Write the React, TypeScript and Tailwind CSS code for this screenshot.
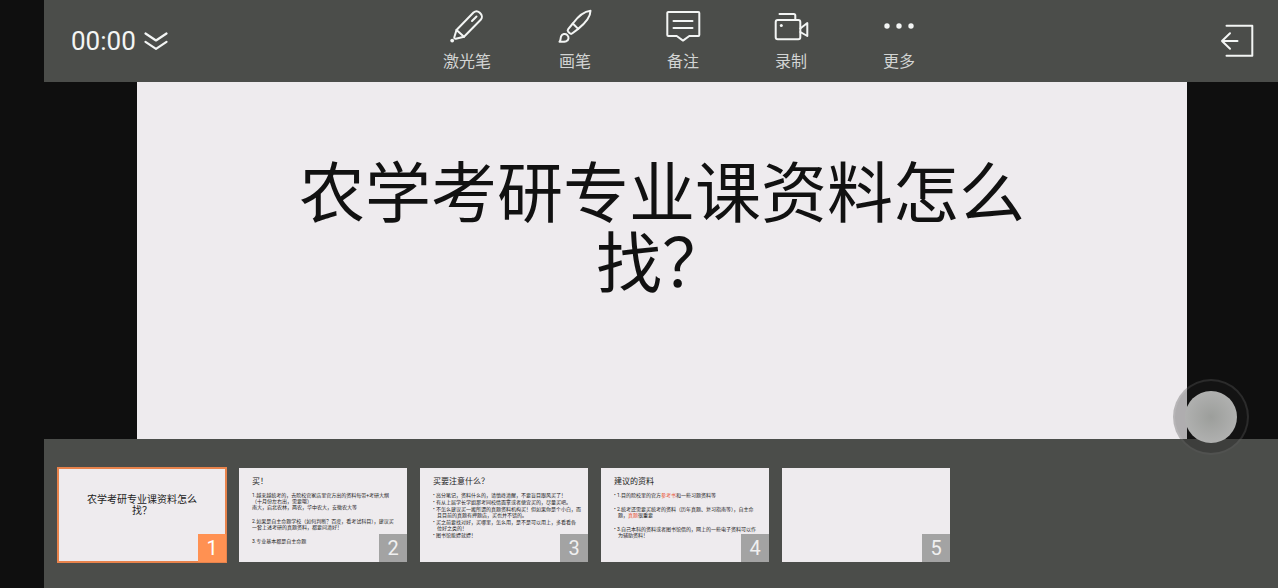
import React, { ReactNode, useState } from 'react'

type TOOL_TYPE = {
    label: string
    icon: ReactNode
}

type SLIDE_TYPE = {
    id: number
    label: string
    content: ReactNode
}

const tools: TOOL_TYPE[] = [
    {
        label: '激光笔',
        icon: (
            <>
                <path d="M7.5 22 24.5 4.5a4.6 4.6 0 0 1 6 0l1.200 1.200a4.400 4.400 0 0 1 0 6L15 28.800 6.800 30.800a1.300 1.300 0 0 1-1.500-1.600Z" />
                <path d="m7.500 22 7.500 6.800M23 13l4.500-4.500" />
                <circle cx="3.200" cy="32.600" r="1.900" fill="currentColor" stroke="none" />
            </>
        ),
    },
    {
        label: '画笔',
        icon: (
            <>
                <path d="M33.500 2.800C27 3.500 21 8.500 15.800 15.500l-4.600 5.600a2 2 0 0 0 0 2.600l1.600 1.600a2 2 0 0 0 2.600 0l5.800-4.400C28.500 15 33.500 9.500 33.500 2.800Z" />
                <path d="m15.800 15.500 5.400 5.400" />
                <path d="M2.500 33.800c1.500-1.500.8-3.500 1.600-5.500 1-2.500 4.200-3.200 6.200-1.200s1.500 5-1 6.100c-2 .8-4.600.6-6.800.6Z" />
            </>
        ),
    },
    {
        label: '备注',
        icon: (
            <>
                <path d="M3.300 4h30a1 1 0 0 1 1 1v22a1 1 0 0 1-1 1h-9L18 32.600 11.700 28H3.300a1 1 0 0 1-1-1V5a1 1 0 0 1 1-1Z" />
                <path d="M8.500 13h19M8.500 20h19" />
            </>
        ),
    },
    {
        label: '录制',
        icon: (
            <>
                <rect x="2.700" y="12" width="24.600" height="19.300" rx="2" />
                <path d="M6.500 6h14.300a1.500 1.500 0 0 1 1.500 1.500V12M27.300 20.500l7-5.500v13l-7-4" />
                <circle cx="8.300" cy="17.400" r="1.500" fill="currentColor" stroke="none" />
            </>
        ),
    },
    {
        label: '更多',
        icon: (
            <g fill="currentColor" stroke="none">
                <circle cx="6" cy="18" r="2.700" />
                <circle cx="18" cy="18" r="2.700" />
                <circle cx="30" cy="18" r="2.700" />
            </g>
        ),
    },
]

const slides: SLIDE_TYPE[] = [
    {
        id: 1,
        label: '农学考研专业课资料怎么找？',
        content: (
            <div className="pt-[26px] text-center text-[10px] leading-[11px]">
                农学考研专业课资料怎么<br />找？
            </div>
        ),
    },
    {
        id: 2,
        label: '买！',
        content: (
            <div className="pt-2 pl-[13px]">
                <div className="text-[8px] leading-3">买！</div>
                <div className="pt-1 text-[5px] leading-[6px]">
                    <p>1.越来越统考的，去院校官家店里官方出的资料每带+考研大纲</p>
                    <p>（十月份左右出，需要哦）</p>
                    <p>南大，启北农林，两农，华中农大，安徽农大等</p>
                    <p className="pt-2">2.如果是自主命题学校（如何判断？百度，看考试科目），建议买</p>
                    <p>一套上述考研的真题资料，都要问清好！</p>
                    <p className="pt-2">3.专业基本都是自主命题</p>
                </div>
            </div>
        ),
    },
    {
        id: 3,
        label: '买要注意什么？',
        content: (
            <div className="pt-2 pl-[13px]">
                <div className="text-[8px] leading-3">买要注意什么？</div>
                <ul className="pt-1 text-[5px] leading-[6px]">
                    <li>• 高分笔记，资料什么的，请慎终清醒，不要盲目跟风买了！</li>
                    <li className="pt-px">• 有从上届学长学姐那考同校情面拿或者便宜买的，尽量买吧。</li>
                    <li className="pt-px">• 不怎么建议买一搬所谓的真题资料机构买！但如果你是个小白，而</li>
                    <li className="pl-1">且目前的真题有押题店，买也并不错的。</li>
                    <li className="pt-px">• 买之前要找对好，买哪里，怎么用，是不是可以用上，多看看各</li>
                    <li className="pl-1">位好之类的！</li>
                    <li className="pt-px">• 图书馆能嫖就嫖！</li>
                </ul>
            </div>
        ),
    },
    {
        id: 4,
        label: '建议的资料',
        content: (
            <div className="pt-2 pl-[13px]">
                <div className="text-[8px] leading-3">建议的资料</div>
                <ul className="pt-1 text-[5px] leading-[6px]">
                    <li>• 1.目的院校里的官方<span className="text-[#e8502e]">参考书</span>和一些习题资料等</li>
                    <li className="pt-2">• 2.统考还需要买统考的资料（历年真题、复习指南等），自主命</li>
                    <li className="pl-1">题，<span className="text-[#e8502e]">真题</span>很重要</li>
                    <li className="pt-2">• 3.自己本科的资料或者图书馆借的，网上的一些电子资料可以作</li>
                    <li className="pl-1">为辅助资料！</li>
                </ul>
            </div>
        ),
    },
    { id: 5, label: '空白页', content: null },
]

const App = () => {

    const [current, setCurrent] = useState(1)

    return (
        <div className="flex min-h-screen bg-[#0f0f0f] pl-11 font-[Roboto,'Noto_Sans_CJK_SC',sans-serif]">
            <div className="flex min-w-0 flex-1 flex-col">

                {/* toolbar */}
                <header className="flex items-center bg-[#4b4d4a] py-1 text-[#f3f5f4]">
                    <div className="flex-1">
                        <button type="button" className="ml-[27px] flex items-center gap-2 text-[26px] leading-8">
                            <span>00:00</span>
                            <svg className="h-[18px] w-6" viewBox="0 0 24 18" fill="none" stroke="currentColor" strokeWidth="2.200" strokeLinecap="round" strokeLinejoin="round">
                                <path d="m1.500 1.500 10.500 7 10.500-7M1.500 9.800l10.500 7 10.500-7" />
                            </svg>
                        </button>
                    </div>
                    <nav className="ml-11 grid grid-cols-5">
                        {tools.map((tool) => (
                            <button key={tool.label} type="button" className="flex w-[108px] flex-col items-center gap-[7px] pt-1 pb-[5px]">
                                <svg className="size-9" viewBox="0 0 36 36" fill="none" stroke="currentColor" strokeWidth="2" strokeLinecap="round" strokeLinejoin="round">
                                    {tool.icon}
                                </svg>
                                <span className="text-base leading-[22px] text-[#d3d5d4]">{tool.label}</span>
                            </button>
                        ))}
                    </nav>
                    <div className="flex flex-1 justify-end">
                        <button type="button" aria-label="退出" className="mr-[23px]">
                            <svg className="size-9" viewBox="0 0 36 36" fill="none" stroke="currentColor" strokeWidth="2" strokeLinecap="round" strokeLinejoin="round">
                                <path d="M7.500 2.700h25.800v30H7.500M18.500 18H3M11 10.200 3 18l8 7.800" />
                            </svg>
                        </button>
                    </div>
                </header>

                {/* current slide */}
                <main className="relative flex flex-1 pr-[91px] pl-[93px]">
                    <section className="flex-1 bg-[#eeebee] pt-[78px] text-[#111111]">
                        <h1 className="text-center text-[66px] leading-[70px]">
                            农学考研专业课资料怎么<br />找？
                        </h1>
                    </section>
                    <button type="button" aria-label="悬浮球" className="absolute right-[29px] -bottom-4 flex size-19 items-center justify-center rounded-full border-2 border-white/10 bg-[#1e1e1e]/30">
                        <span className="size-13 rounded-full bg-radial from-[#9c9e9b] to-[#b8b8b8]" />
                    </button>
                </main>

                {/* thumbnails */}
                <footer className="flex gap-[13px] bg-[#4b4d4a] pt-[29px] pb-[26px] pl-[14px]">
                    {slides.map((slide) => (
                        <button
                            key={slide.id}
                            type="button"
                            aria-label={slide.label}
                            onClick={() => setCurrent(slide.id)}
                            className={`relative h-[94px] w-[168px] shrink-0 bg-[#eeebee] text-left text-[#222222] ${current === slide.id ? 'outline-2 -outline-offset-1 outline-[#e8834c]' : ''}`}
                        >
                            <div className="h-full overflow-hidden whitespace-nowrap">{slide.content}</div>
                            <span className={`absolute right-0 bottom-0 flex size-7 items-center justify-center text-xl ${current === slide.id ? 'bg-[#ff9152] text-white' : 'bg-[#a3a3a3] text-[#f0f0f0]'}`}>
                                {slide.id}
                            </span>
                        </button>
                    ))}
                </footer>
            </div>
        </div>
    )
}

export default App
